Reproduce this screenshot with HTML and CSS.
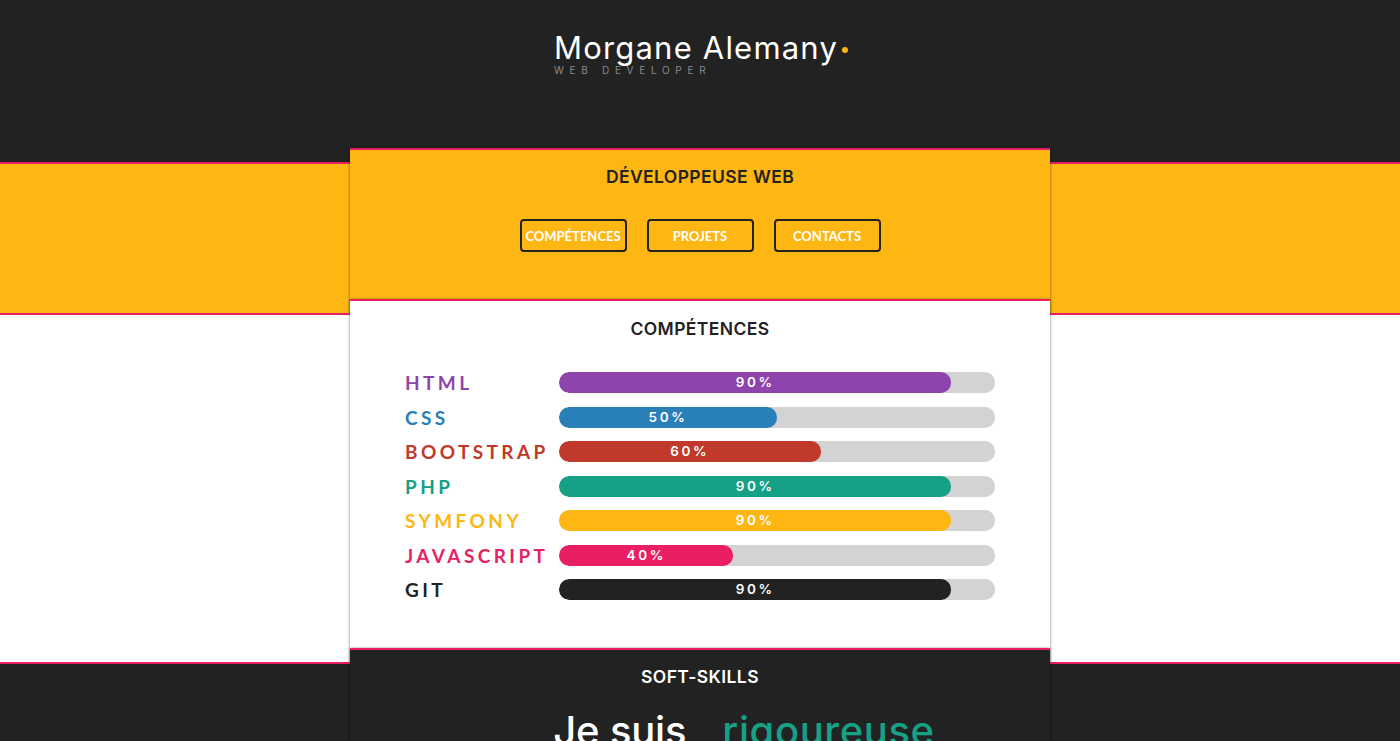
FILE: index.html
```html
<!DOCTYPE html>
<html lang="fr">
<head>
<meta charset="utf-8">
<title>Morgane Alemany</title>
<link rel="stylesheet" href="styles.css">
</head>
<body>
<header class="top">
  <div class="brand">
    <div class="brand-name">Morgane Alemany<span class="brand-dot"></span></div>
    <div class="brand-sub">WEB DEVELOPER</div>
  </div>
</header>

<section class="band band-yellow">
  <div class="panel panel-yellow">
    <h1 class="title">DÉVELOPPEUSE WEB</h1>
    <nav class="nav">
      <a class="nav-btn" href="#competences">COMPÉTENCES</a>
      <a class="nav-btn" href="#projets">PROJETS</a>
      <a class="nav-btn" href="#contacts">CONTACTS</a>
    </nav>
  </div>
</section>

<section class="band band-white" id="competences">
  <div class="panel panel-white">
    <h2 class="title">COMPÉTENCES</h2>
    <div class="skills">
      <div class="skill"><span class="skill-name c-purple">HTML</span><div class="track"><div class="fill bg-purple" style="width:90%">90%</div></div></div>
      <div class="skill"><span class="skill-name c-blue">CSS</span><div class="track"><div class="fill bg-blue" style="width:50%">50%</div></div></div>
      <div class="skill"><span class="skill-name c-red">BOOTSTRAP</span><div class="track"><div class="fill bg-red" style="width:60%">60%</div></div></div>
      <div class="skill"><span class="skill-name c-teal">PHP</span><div class="track"><div class="fill bg-teal" style="width:90%">90%</div></div></div>
      <div class="skill"><span class="skill-name c-yellow">SYMFONY</span><div class="track"><div class="fill bg-yellow" style="width:90%">90%</div></div></div>
      <div class="skill"><span class="skill-name c-pink">JAVASCRIPT</span><div class="track"><div class="fill bg-pink" style="width:40%">40%</div></div></div>
      <div class="skill"><span class="skill-name c-dark">GIT</span><div class="track"><div class="fill bg-dark" style="width:90%">90%</div></div></div>
    </div>
  </div>
</section>

<section class="band band-dark">
  <div class="panel panel-dark">
    <h2 class="title title-light">SOFT-SKILLS</h2>
    <p class="typed"><span class="typed-lead">Je suis</span><span class="typed-word">rigoureuse</span></p>
  </div>
</section>
</body>
</html>
```

FILE: styles.css
```css
* { box-sizing: border-box; }

html, body {
  margin: 0;
  padding: 0;
  background: #222222;
}

body {
  font-family: "Inter", "Noto Sans", sans-serif;
  color: #222222;
}

.top {
  height: 162px;
  background: #222222;
  display: flex;
  justify-content: center;
  padding-top: 32px;
}

.brand {
  display: inline-block;
  padding-left: 2px;
}

.brand-name {
  color: #ffffff;
  font-family: "Inter", sans-serif;
  font-size: 31px;
  font-weight: 400;
  line-height: 31px;
  letter-spacing: 1.2px;
}

.brand-dot {
  display: inline-block;
  width: 6px;
  height: 6px;
  border-radius: 50%;
  background: #feb613;
  margin-left: 4px;
  vertical-align: 6px;
}

.brand-sub {
  color: #8a8a8a;
  font-size: 10px;
  letter-spacing: 5.7px;
  line-height: 10px;
  margin-top: 2px;
}

.band {
  border-top: 2px solid #e91e63;
}

.band-yellow { background: #feb613; }
.band-white { background: #ffffff; }
.band-dark { background: #222222; }

.panel {
  width: 50%;
  margin: -16px auto 0;
  border-top: 2px solid #e91e63;
  text-align: center;
  box-shadow: -1px 0 2px rgba(0,0,0,0.25), 1px 0 2px rgba(0,0,0,0.25);
}

.panel-yellow {
  background: #feb613;
  padding: 16px 0 61px;
}

.panel-white {
  background: #ffffff;
  padding: 17px 0 62px;
}

.panel-dark {
  background: #222222;
  padding: 16px 0 0;
  height: 120px;
  overflow: hidden;
}

.title {
  margin: 0;
  font-family: "Inter", sans-serif;
  font-size: 17.5px;
  font-weight: 600;
  line-height: 22px;
  letter-spacing: 0.4px;
  color: #222222;
}

.title-light { color: #ffffff; }

.nav {
  display: flex;
  justify-content: center;
  gap: 20px;
  margin-top: 31px;
}

.nav-btn {
  display: flex;
  align-items: center;
  justify-content: center;
  width: 107px;
  height: 33px;
  border: 2px solid #222222;
  border-radius: 4px;
  color: #ffffff;
  text-decoration: none;
  font-family: "Lato", sans-serif;
  font-weight: 700;
  font-size: 13px;
}

.skills {
  margin: 32px auto 0;
  width: 590px;
  display: flex;
  flex-direction: column;
  gap: 13.5px;
}

.skill {
  display: flex;
  align-items: center;
  height: 21px;
}

.skill-name {
  width: 154px;
  flex: none;
  text-align: left;
  font-family: "Lato", sans-serif;
  font-weight: 700;
  font-size: 19px;
  letter-spacing: 3.4px;
}

.track {
  flex: 1;
  height: 21px;
  background: #d3d3d3;
  border-radius: 10px;
  overflow: hidden;
}

.fill {
  height: 100%;
  border-radius: 10px;
  color: #ffffff;
  font-family: "Inter", sans-serif;
  font-weight: 600;
  font-size: 13.5px;
  letter-spacing: 2.6px;
  line-height: 21px;
  text-align: center;
}

.c-purple { color: #8e44ad; }
.c-blue { color: #2980b9; }
.c-red { color: #c0392b; }
.c-teal { color: #16a085; }
.c-yellow { color: #feb613; }
.c-pink { color: #e91e63; }
.c-dark { color: #222222; }

.bg-purple { background: #8e44ad; }
.bg-blue { background: #2980b9; }
.bg-red { background: #c0392b; }
.bg-teal { background: #16a085; }
.bg-yellow { background: #feb613; }
.bg-pink { background: #e91e63; }
.bg-dark { background: #222222; }

.typed {
  margin: 20px 0 0;
  padding-left: 88px;
  color: #ffffff;
  font-family: "Inter", sans-serif;
  font-size: 40px;
  font-weight: 500;
  line-height: 46px;
  letter-spacing: 0.6px;
}

.typed-lead {
  margin-right: 36px;
  letter-spacing: -0.2px;
}

.typed-word {
  color: #16a085;
}
```
